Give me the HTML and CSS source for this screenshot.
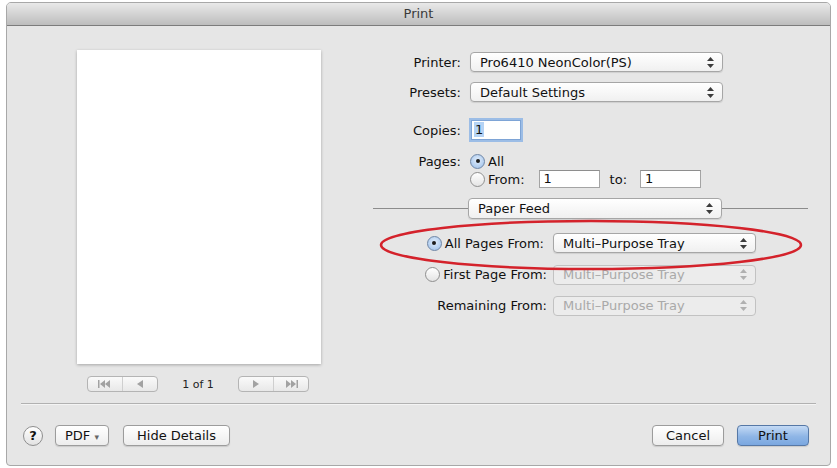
FILE: index.html
```html
<!DOCTYPE html>
<html lang="en">
<head>
  <meta charset="UTF-8">
  <title>Print</title>
  <link rel="stylesheet" href="styles.css">
</head>
<body>
  <div class="window">
    <div class="titlebar">Print</div>

    <div class="main">
      <div class="preview">
        <div class="sheet"></div>
        <div class="pager">
          <div class="seg">
            <span class="seg-part">
              <svg width="14" height="8" viewBox="0 0 14 8"><rect x="0" y="0" width="1.5" height="8"/><path d="M7 0 L2 4 L7 8Z M12 0 L7 4 L12 8Z"/></svg>
            </span>
            <span class="seg-part">
              <svg width="8" height="8" viewBox="0 0 8 8"><path d="M7 0 L1 4 L7 8Z"/></svg>
            </span>
          </div>
          <span class="page-count">1 of 1</span>
          <div class="seg">
            <span class="seg-part">
              <svg width="8" height="8" viewBox="0 0 8 8"><path d="M1 0 L7 4 L1 8Z"/></svg>
            </span>
            <span class="seg-part">
              <svg width="14" height="8" viewBox="0 0 14 8"><path d="M2 0 L7 4 L2 8Z M7 0 L12 4 L7 8Z"/><rect x="12.5" y="0" width="1.5" height="8"/></svg>
            </span>
          </div>
        </div>
      </div>

      <div class="settings">
        <div class="row row-printer">
          <label class="lbl">Printer:</label>
          <div class="popup w-wide"><span>Pro6410 NeonColor(PS)</span><svg class="updown" width="7" height="11" viewBox="0 0 7 11"><path d="M3.5 0 L7 4 L0 4Z M0 7 L7 7 L3.5 11Z"/></svg></div>
        </div>
        <div class="row row-presets">
          <label class="lbl">Presets:</label>
          <div class="popup w-wide"><span>Default Settings</span><svg class="updown" width="7" height="11" viewBox="0 0 7 11"><path d="M3.5 0 L7 4 L0 4Z M0 7 L7 7 L3.5 11Z"/></svg></div>
        </div>
        <div class="row row-copies">
          <label class="lbl">Copies:</label>
          <div class="field copies focus"><span class="sel">1</span></div>
        </div>
        <div class="row row-pages">
          <label class="lbl">Pages:</label>
          <span class="radio on"></span><span class="opt">All</span>
        </div>
        <div class="row row-range">
          <span class="lbl"></span>
          <span class="radio"></span><span class="opt">From:</span>
          <div class="field range">1</div>
          <span class="opt to">to:</span>
          <div class="field range">1</div>
        </div>

        <div class="section">
          <div class="popup w-section"><span>Paper Feed</span><svg class="updown" width="7" height="11" viewBox="0 0 7 11"><path d="M3.5 0 L7 4 L0 4Z M0 7 L7 7 L3.5 11Z"/></svg></div>
        </div>

        <div class="feed feed-all">
          <div class="feed-lbl"><span class="radio on"></span>All Pages From:</div>
          <div class="popup w-feed"><span>Multi&#8211;Purpose Tray</span><svg class="updown" width="7" height="11" viewBox="0 0 7 11"><path d="M3.5 0 L7 4 L0 4Z M0 7 L7 7 L3.5 11Z"/></svg></div>
        </div>
        <div class="feed feed-first">
          <div class="feed-lbl"><span class="radio"></span>First Page From:</div>
          <div class="popup w-feed off"><span>Multi&#8211;Purpose Tray</span><svg class="updown" width="7" height="11" viewBox="0 0 7 11"><path d="M3.5 0 L7 4 L0 4Z M0 7 L7 7 L3.5 11Z"/></svg></div>
        </div>
        <div class="feed feed-rest">
          <div class="feed-lbl">Remaining From:</div>
          <div class="popup w-feed off"><span>Multi&#8211;Purpose Tray</span><svg class="updown" width="7" height="11" viewBox="0 0 7 11"><path d="M3.5 0 L7 4 L0 4Z M0 7 L7 7 L3.5 11Z"/></svg></div>
        </div>
      </div>
    </div>

    <div class="rule"></div>

    <div class="footer">
      <button class="help">?</button>
      <button class="btn pdf">PDF <span class="caret">&#9662;</span></button>
      <button class="btn hide">Hide Details</button>
      <span class="spacer"></span>
      <button class="btn cancel">Cancel</button>
      <button class="btn primary">Print</button>
    </div>

    <!-- callout round the paper source row -->
    <svg class="callout" width="430" height="54" viewBox="0 0 430 54">
      <ellipse cx="215" cy="27" rx="210" ry="24" fill="none" stroke="#d4222b" stroke-width="2.5"/>
    </svg>
  </div>
</body>
</html>
```

FILE: styles.css
```css
body {
  margin: 0;
  background: #fff;
  font-family: "DejaVu Sans", sans-serif;
  font-size: 13px;
  color: #111;
}
.window {
  position: relative;
  box-sizing: border-box;
  width: 825px;
  height: 464px;
  margin: 2px 0 0 6px;
  background: #e6e6e6;
  border: 1px solid #a8a8a8;
  border-radius: 5px 5px 4px 4px;
  overflow: hidden;
}
.titlebar {
  height: 22px;
  line-height: 22px;
  text-align: center;
  color: #3a3a3a;
  background: linear-gradient(#e9e9e9, #bdbdbd);
  border-bottom: 1px solid #7c7c7c;
}
.main {
  display: flex;
  height: 377px;
}

/* left: page preview */
.preview {
  width: 296px;
  padding-left: 70px;
}
.sheet {
  width: 244px;
  height: 314px;
  margin-top: 24px;
  background: #fff;
  box-shadow: 0 1px 3px rgba(0,0,0,0.28);
}
.pager {
  display: flex;
  align-items: center;
  margin-top: 12px;
  padding-left: 10px;
  height: 16px;
}
.seg {
  display: flex;
  width: 71px;
  height: 16px;
  box-sizing: border-box;
  border: 1px solid #b4b4b4;
  border-radius: 4px;
  background: linear-gradient(#fafafa, #e8e8e8);
}
.seg-part {
  flex: 1;
  display: flex;
  align-items: center;
  justify-content: center;
  fill: #a2a2a2;
}
.seg-part + .seg-part {
  border-left: 1px solid #cfcfcf;
}
.page-count {
  width: 32px;
  margin: 0 24px;
  font-size: 11px;
  color: #222;
  text-align: center;
  white-space: nowrap;
}

/* right: settings */
.settings {
  width: 435px;
}
.row {
  display: flex;
  align-items: center;
}
.lbl {
  width: 88px;
  margin-right: 9px;
  text-align: right;
}
.row-printer { margin-top: 26px; }
.row-presets { margin-top: 10px; }
.row-copies { margin-top: 18px; }
.row-pages { margin-top: 13px; height: 16px; }
.row-range { margin-top: 1px; }

.popup {
  display: flex;
  align-items: center;
  justify-content: space-between;
  box-sizing: border-box;
  height: 20px;
  padding: 0 8px 0 9px;
  border: 1px solid #a6a6a6;
  border-radius: 4px;
  background: linear-gradient(#ffffff, #f0f0f0);
  box-shadow: 0 1px 1px rgba(0,0,0,0.1);
}
.popup.off {
  color: #a9a9a9;
  border-color: #c2c2c2;
  background: #ececec;
  box-shadow: none;
}
.updown { fill: #3c3c3c; }
.popup.off .updown { fill: #b0b0b0; }
.w-wide { width: 253px; }
.w-section { width: 254px; height: 21px; margin-left: 95px; }
.w-feed { width: 203px; }

.field {
  box-sizing: border-box;
  height: 18px;
  padding: 0 4px;
  line-height: 16px;
  background: #fff;
  border: 1px solid #a4a4a4;
  border-top-color: #8e8e8e;
}
.copies {
  width: 50px;
  height: 20px;
  line-height: 18px;
  margin-left: 1px;
  padding: 0 2px;
}
.copies.focus {
  border-color: #7ea4d6;
  box-shadow: 0 0 0 2px #9cbde6;
}
.sel {
  background: #b5d3f5;
  padding: 0 1px;
}
.range { width: 61px; margin-left: 14px; }
.to { margin-left: 10px; }
.to + .field { margin-left: 13px; }

.radio {
  position: relative;
  display: inline-block;
  box-sizing: border-box;
  width: 15px;
  height: 15px;
  margin-right: 3px;
  border: 1px solid #8f8f8f;
  border-radius: 50%;
  background: linear-gradient(#ffffff, #e4e4e4);
  flex: none;
}
.radio.on {
  border-color: #6f86a6;
  background: radial-gradient(circle at 50% 40%, #e2eefc, #99bde8);
}
.radio.on::after {
  content: "";
  position: absolute;
  left: 4.5px;
  top: 4.5px;
  width: 4px;
  height: 4px;
  border-radius: 50%;
  background: #1d1d1d;
}

/* Paper Feed divider */
.section {
  position: relative;
  margin-top: 10px;
  height: 21px;
}
.section::before {
  content: "";
  position: absolute;
  left: 0;
  right: 0;
  top: 10px;
  border-top: 1px solid #8c8c8c;
}
.section .popup { position: relative; }

.feed {
  display: flex;
  align-items: center;
}
.feed-all { margin-top: 14px; }
.feed-first { margin-top: 11px; height: 21px; }
.feed-rest { margin-top: 10px; height: 21px; }
.feed-lbl {
  display: flex;
  align-items: center;
  justify-content: flex-end;
  width: 174px;
  margin-right: 6px;
}
.feed-lbl .radio { margin-right: 3px; }
.feed-all .feed-lbl { padding-right: 3px; box-sizing: border-box; }

.rule {
  margin: 0 14px;
  border-top: 1px solid #b1b1b1;
  border-bottom: 1px solid #f4f4f4;
}

.footer {
  display: flex;
  align-items: center;
  padding: 20px 21px 0 16px;
}
.footer button {
  font-family: "DejaVu Sans", sans-serif;
  font-size: 13px;
  color: #111;
}
.help {
  width: 20px;
  height: 20px;
  padding: 0;
  border: 1px solid #8e8e8e;
  border-radius: 50%;
  background: linear-gradient(#ffffff, #e2e2e2);
  font-weight: bold;
  line-height: 18px;
}
.btn {
  height: 21px;
  box-sizing: border-box;
  padding: 0 10px;
  border: 1px solid #9c9c9c;
  border-radius: 4px;
  background: linear-gradient(#ffffff, #ededed);
  box-shadow: 0 1px 1px rgba(0,0,0,0.12);
}
.pdf { width: 54px; margin-left: 12px; padding: 0 6px; }
.caret { font-size: 9px; color: #666; }
.hide { width: 107px; margin-left: 14px; }
.spacer { flex: 1; }
.cancel { width: 72px; }
.primary {
  width: 72px;
  margin-left: 13px;
  border-color: #5678a6;
  background: linear-gradient(#c4daf5, #8fb6e6 55%, #7aa7e0);
}

.callout {
  position: absolute;
  left: 369px;
  top: 215px;
}
```
